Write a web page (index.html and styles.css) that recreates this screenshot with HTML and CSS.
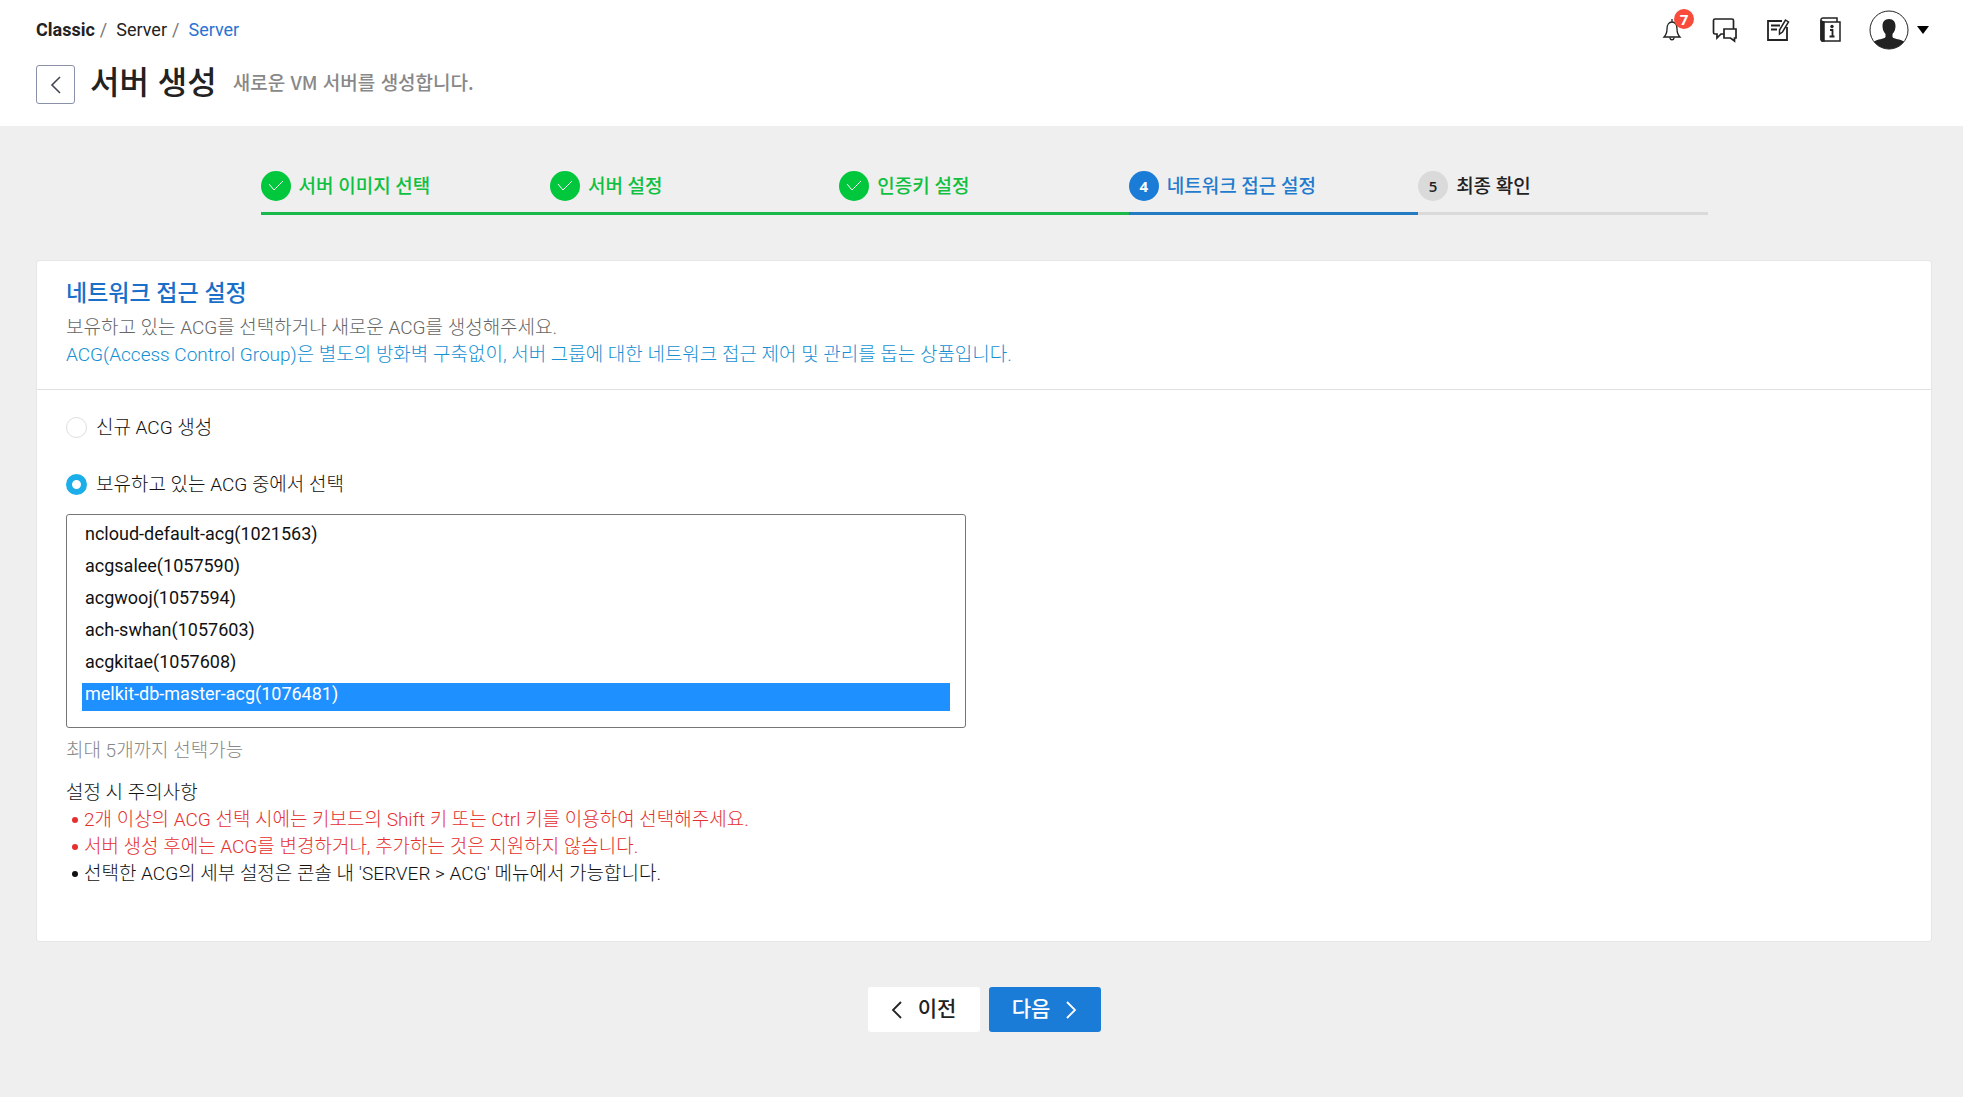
FILE: index.html
```html
<!DOCTYPE html>
<html lang="ko">
<head>
    <meta charset="UTF-8">
    <meta name="viewport" content="width=device-width, initial-scale=1.0">
    <title>서버 생성</title>
    <link rel="stylesheet" href="styles.css">
</head>
<body>
<header class="header">
    <div class="topbar">
        <nav class="breadcrumb">
            <a class="root" href="#">Classic</a><span class="slash">/</span>
            <a href="#">Server</a><span class="slash">/</span>
            <a class="current" href="#">Server</a>
        </nav>
        <div class="tools">
            <button class="tool" type="button" aria-label="알림">
                <svg width="20" height="24" viewBox="0 0 20 24" fill="none" stroke="#222" stroke-width="1.3">
                    <path d="M10 1v3M2 19c2-2 3-4 3-8 0-4.500 2-7 5-7s5 2.500 5 7c0 4 1 6 3 8z"/>
                    <path d="M8 19.500c0 3 4 3 4 0"/>
                </svg>
                <span class="badge">7</span>
            </button>
            <button class="tool" type="button" aria-label="문의">
                <svg width="26" height="26" viewBox="0 0 26 26" fill="none" stroke="#222" stroke-width="1.7">
                    <path d="M12 17H9l-4 4v-4H3a1.500 1.500 0 0 1-1.500-1.500v-12A1.500 1.500 0 0 1 3 2h17a1.500 1.500 0 0 1 1.500 1.500V12"/>
                    <path d="M12 12h12v9h-1.500v3l-4-3H12z"/>
                </svg>
            </button>
            <button class="tool" type="button" aria-label="메모">
                <svg width="24" height="24" viewBox="0 0 24 24" fill="none" stroke="#222" stroke-width="1.8">
                    <path d="M16 3H2v19h19V9"/>
                    <path d="M5 7.500h9M5 11.500h6"/>
                    <path d="M19.500 2l3 2-6 10-3 2v-4z" stroke-width="1.500"/>
                </svg>
            </button>
            <button class="tool" type="button" aria-label="가이드">
                <svg width="24" height="26" viewBox="0 0 24 26" fill="none" stroke="#222" stroke-width="1.500">
                    <path d="M3 5c-2-2-1-4 1-4h14v4M3 5h18v19H4c-1.500 0-2-1-2-2V4"/>
                    <path d="M2 4l3 1v19H3l-1-2z" fill="#222"/>
                    <path d="M11 13h2.500v6M10.500 19.500h5" stroke-width="1.800"/>
                    <circle cx="13" cy="9.500" r="1.700" fill="#222" stroke="none"/>
                </svg>
            </button>
            <button class="profile" type="button" aria-label="내 계정">
                <svg width="40" height="40" viewBox="0 0 40 40">
                    <clipPath id="face"><circle cx="20" cy="20" r="19"/></clipPath>
                    <path clip-path="url(#face)" fill="#222" d="M20 9c4.500 0 6.500 3 6.500 7 0 3-1 6-3 8v3c1.500 2 6 2 9.500 3.500 2 1 4 2.500 5 4.500v6H2v-6c1-2 3-3.500 5-4.500 3.500-1.500 8-1.500 9.500-3.500v-3c-2-2-3-5-3-8 0-4 2-7 6.500-7z"/>
                    <circle cx="20" cy="20" r="19" fill="none" stroke="#222"/>
                </svg>
                <svg width="12" height="8" viewBox="0 0 12 8"><path d="M0 0h12L6 8z"/></svg>
            </button>
        </div>
    </div>
    <div class="heading">
        <button class="back" type="button" aria-label="뒤로">
            <svg width="12" height="18" viewBox="0 0 12 18" fill="none" stroke="#445" stroke-width="1.6"><path d="M10 1L2 9l8 8"/></svg>
        </button>
        <h1>서버 생성</h1>
        <p>새로운 VM 서버를 생성합니다.</p>
    </div>
</header>

<main class="content">
    <ol class="steps">
        <li class="done">
            <span class="mark"><svg width="18" height="14" viewBox="0 0 18 14"><path d="M2 5l5 6 9-9"/></svg></span>서버 이미지 선택
        </li>
        <li class="done">
            <span class="mark"><svg width="18" height="14" viewBox="0 0 18 14"><path d="M2 5l5 6 9-9"/></svg></span>서버 설정
        </li>
        <li class="done">
            <span class="mark"><svg width="18" height="14" viewBox="0 0 18 14"><path d="M2 5l5 6 9-9"/></svg></span>인증키 설정
        </li>
        <li class="active"><span class="mark">4</span>네트워크 접근 설정</li>
        <li><span class="mark">5</span>최종 확인</li>
    </ol>

    <section class="card">
        <div class="card-head">
            <h2>네트워크 접근 설정</h2>
            <p>보유하고 있는 ACG를 선택하거나 새로운 ACG를 생성해주세요.</p>
            <p class="info">ACG(Access Control Group)은 별도의 방화벽 구축없이, 서버 그룹에 대한 네트워크 접근 제어 및 관리를 돕는 상품입니다.</p>
        </div>
        <form class="card-body" id="acgForm">
            <label class="choice"><input type="radio" name="acgType" value="new">신규 ACG 생성</label>
            <label class="choice"><input type="radio" name="acgType" value="own" checked>보유하고 있는 ACG 중에서 선택</label>
            <select class="acg-list" multiple size="6" aria-label="보유하고 있는 ACG">
                <option>ncloud-default-acg(1021563)</option>
                <option>acgsalee(1057590)</option>
                <option>acgwooj(1057594)</option>
                <option>ach-swhan(1057603)</option>
                <option>acgkitae(1057608)</option>
                <option selected>melkit-db-master-acg(1076481)</option>
            </select>
            <p class="limit">최대 5개까지 선택가능</p>
            <p class="notes-title">설정 시 주의사항</p>
            <ul class="notes">
                <li class="warn">2개 이상의 ACG 선택 시에는 키보드의 Shift 키 또는 Ctrl 키를 이용하여 선택해주세요.</li>
                <li class="warn">서버 생성 후에는 ACG를 변경하거나, 추가하는 것은 지원하지 않습니다.</li>
                <li>선택한 ACG의 세부 설정은 콘솔 내 'SERVER &gt; ACG' 메뉴에서 가능합니다.</li>
            </ul>
        </form>
    </section>

    <div class="actions">
        <button class="btn" type="button">
            <svg width="12" height="18" viewBox="0 0 12 18"><path d="M10 1L2 9l8 8"/></svg>이전
        </button>
        <button class="btn primary" type="submit" form="acgForm">
            다음<svg width="12" height="18" viewBox="0 0 12 18"><path d="M2 1l8 8-8 8"/></svg>
        </button>
    </div>
</main>
</body>
</html>
```
FILE: styles.css
```css
* {
    box-sizing: border-box;
}
body {
    margin: 0;
    background-color: #efefef;
    color: #222;
    font-family: Roboto, "Noto Sans CJK KR", sans-serif;
    font-size: 19px;
    font-weight: 300;
    line-height: 27px;
}
h1, h2, p, ul, ol {
    margin: 0;
    padding: 0;
}
a {
    color: inherit;
    text-decoration: none;
}
button, select {
    font: inherit;
    color: inherit;
    cursor: pointer;
}
.header {
    height: 126px;
    padding: 10px 34px 0 36px;
    background-color: #fff;
}
.topbar {
    display: flex;
    justify-content: space-between;
    height: 40px;
}
.breadcrumb {
    display: flex;
    align-items: center;
    height: 39px;
    font-size: 18px;
    font-weight: 400;
}
.breadcrumb .root {
    font-weight: 700;
}
.breadcrumb .slash {
    margin: 0 9px 0 5px;
    color: #777;
}
.breadcrumb .current {
    color: #2a73d2;
}
.tools {
    display: flex;
    align-items: center;
    gap: 27px;
}
.tool, .profile {
    display: flex;
    align-items: center;
    justify-content: center;
    position: relative;
    padding: 0;
    border: none;
    background: none;
}
.tool {
    width: 26px;
    height: 26px;
}
.badge {
    position: absolute;
    top: -8px;
    right: -9px;
    width: 20px;
    height: 20px;
    border-radius: 50%;
    background-color: #f84b3c;
    color: #fff;
    font-family: "Open Sans", sans-serif;
    font-size: 15px;
    font-weight: 700;
    line-height: 20px;
}
.profile {
    gap: 8px;
    margin-left: -2px;
}
.heading {
    display: flex;
    align-items: center;
    margin-top: 5px;
}
.back {
    display: flex;
    align-items: center;
    justify-content: center;
    width: 39px;
    height: 39px;
    margin-top: 10px;
    border: 1px solid #8a90a8;
    border-radius: 3px;
    background-color: #fff;
}
.heading h1 {
    margin: 0 16px 0 15px;
    font-family: "Noto Sans CJK KR", sans-serif;
    font-size: 32px;
    font-weight: 500;
    line-height: 36px;
}
.heading p {
    margin-top: 4px;
    color: #888;
    font-family: "Noto Sans CJK KR", sans-serif;
    font-weight: 500;
}
.content {
    padding: 45px 31px 64px 36px;
}
.steps {
    display: flex;
    max-width: 1447px;
    margin: 0 auto 45px;
    list-style: none;
    font-weight: 500;
}
.steps li {
    display: flex;
    flex: 1;
    align-items: center;
    height: 44px;
    padding-bottom: 11px;
    border-bottom: 3px solid #dadada;
}
.mark {
    display: flex;
    align-items: center;
    justify-content: center;
    width: 30px;
    height: 30px;
    margin-right: 8px;
    border-radius: 50%;
    background-color: #dadada;
    font-family: "Open Sans", sans-serif;
    font-size: 15px;
    font-weight: 600;
}
.mark path {
    fill: none;
    stroke: #fff;
}
.steps .done {
    border-color: #18b94a;
    color: #10c040;
}
.done .mark {
    background-color: #00c73c;
}
.steps .active {
    border-color: #237bc2;
    color: #237bce;
}
.active .mark {
    background-color: #1a7cd7;
    color: #fff;
    font-weight: 700;
}
.card {
    border: 1px solid #e6e6e6;
    border-radius: 3px;
    background-color: #fff;
}
.card-head {
    padding: 18px 29px 21px;
    border-bottom: 1px solid #e0e0e0;
    color: #666;
}
.card-head h2 {
    margin-bottom: 5px;
    color: #1a70c8;
    font-size: 23px;
    font-weight: 500;
    line-height: 30px;
}
.card-head .info {
    color: #1690d2;
}
.card-body {
    padding: 24px 29px 54px;
    color: #111;
}
.choice {
    display: flex;
    align-items: center;
    width: fit-content;
    margin-bottom: 30px;
}
.choice input {
    appearance: none;
    width: 21px;
    height: 21px;
    margin: 0 9px 0 0;
    border: 1px solid #ddd;
    border-radius: 50%;
    background-color: #fff;
}
.choice input:checked {
    border: 6px solid #1caee8;
}
.acg-list {
    display: block;
    width: 900px;
    max-width: 100%;
    height: 214px;
    margin-top: -14px;
    padding: 8px 15px;
    border: 1px solid #767676;
    border-radius: 3px;
    background-color: #fff;
    color: #111;
    font-size: 18px;
    font-weight: 400;
    overflow: hidden;
}
.acg-list option {
    height: 28px;
    margin-bottom: 4px;
    padding: 0 3px 4px;
    line-height: 24px;
}
.acg-list option:checked {
    background: linear-gradient(#1e90ff, #1e90ff);
    color: #fff;
}
.limit {
    margin-top: 9px;
    color: #888;
}
.notes-title {
    margin-top: 15px;
}
.notes {
    list-style: none;
}
.notes li {
    display: flex;
    align-items: center;
    gap: 6px;
    padding-left: 6px;
}
.notes li::before {
    content: "";
    width: 6px;
    height: 6px;
    border-radius: 50%;
    background-color: currentColor;
}
.notes .warn {
    color: #e5302e;
}
.actions {
    display: flex;
    justify-content: center;
    gap: 9px;
    margin-top: 45px;
}
.btn {
    display: flex;
    align-items: center;
    justify-content: center;
    gap: 15px;
    width: 112px;
    height: 45px;
    padding: 0;
    border: none;
    border-radius: 3px;
    background-color: #fff;
    font-size: 21px;
    font-weight: 500;
}
.btn path {
    fill: none;
    stroke: currentColor;
    stroke-width: 1.8;
}
.btn.primary {
    background-color: #1a7cd7;
    color: #fff;
}
```
